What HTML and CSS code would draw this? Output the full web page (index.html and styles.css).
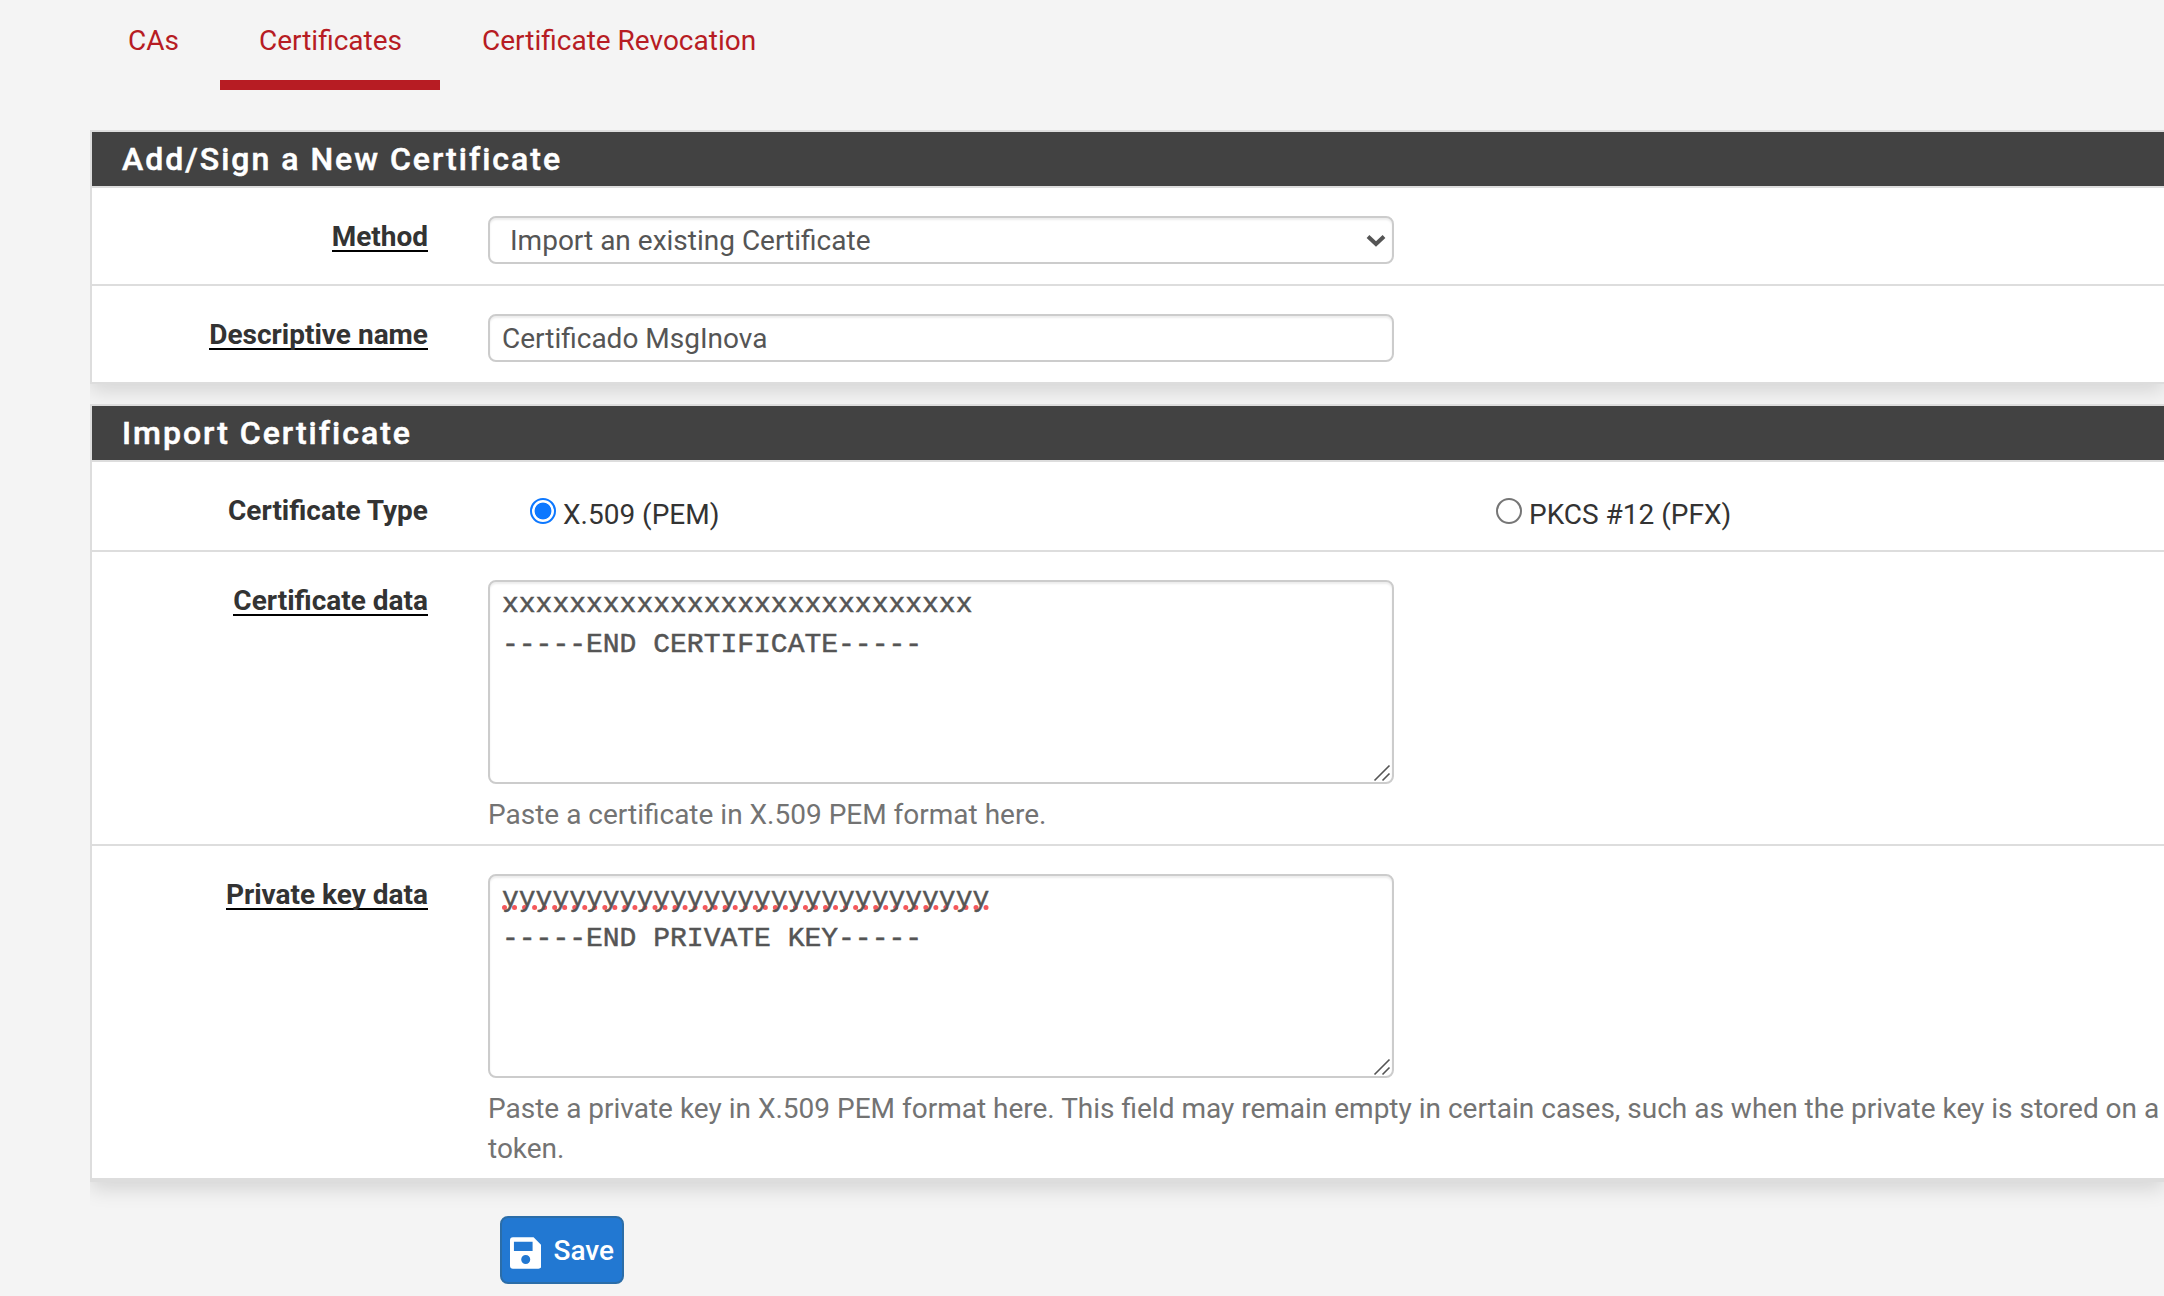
FILE: index.html
```html
<!DOCTYPE html>
<html lang="en">
<head>
<meta charset="utf-8">
<title>Certificates</title>
<link rel="stylesheet" href="styles.css">
</head>
<body>
<nav class="tabs">
  <a class="tab">CAs</a>
  <a class="tab active">Certificates</a>
  <a class="tab">Certificate Revocation</a>
</nav>
<form class="form">
  <section class="panel">
    <h2 class="heading">Add/Sign a New Certificate</h2>
    <div class="row">
      <div class="label"><span class="required">Method</span></div>
      <div class="field">
        <div class="control select"><span>Import an existing Certificate</span>
          <svg class="chevron" width="20" height="14" viewBox="0 0 20 14"><path d="M2 2.5l8 7.5 8-7.5" fill="none" stroke="#555" stroke-width="4"/></svg>
        </div>
      </div>
    </div>
    <div class="row">
      <div class="label"><span class="required">Descriptive name</span></div>
      <div class="field"><div class="control">Certificado MsgInova</div></div>
    </div>
  </section>
  <section class="panel import">
    <h2 class="heading">Import Certificate</h2>
    <div class="row types">
      <div class="label">Certificate Type</div>
      <div class="field radios">
        <label class="option"><span class="radio checked"></span>X.509 (PEM)</label>
        <label class="option"><span class="radio"></span>PKCS #12 (PFX)</label>
      </div>
    </div>
    <div class="row">
      <div class="label"><span class="required">Certificate data</span></div>
      <div class="field">
        <div class="control area"><div>xxxxxxxxxxxxxxxxxxxxxxxxxxxx</div><div>-----END CERTIFICATE-----</div>
          <svg class="grip" width="18" height="18" viewBox="0 0 18 18"><path d="M1.5 16.5l15-15M9.500 16.500l7-7" fill="none" stroke="#555" stroke-width="1.6"/></svg>
        </div>
        <p class="help">Paste a certificate in X.509 PEM format here.</p>
      </div>
    </div>
    <div class="row last">
      <div class="label"><span class="required">Private key data</span></div>
      <div class="field">
        <div class="control area"><div><span class="misspelled">yyyyyyyyyyyyyyyyyyyyyyyyyyyyy</span></div><div>-----END PRIVATE KEY-----</div>
          <svg class="grip" width="18" height="18" viewBox="0 0 18 18"><path d="M1.5 16.5l15-15M9.500 16.500l7-7" fill="none" stroke="#555" stroke-width="1.6"/></svg>
        </div>
        <p class="help">Paste a private key in X.509 PEM format here. This field may remain empty in certain cases, such as when the private key is stored on a<br>token.</p>
      </div>
    </div>
  </section>
  <button class="save" type="button">
    <svg width="32" height="32" viewBox="0 0 32 32"><path fill="#fff" fill-rule="evenodd" d="M3 0h21l8 8v21a3 3 0 0 1-3 3H3a3 3 0 0 1-3-3V3a3 3 0 0 1 3-3zM4 4.500v9.500h19V4.500zM16 18a4.600 4.600 0 1 0 0 9.200a4.600 4.600 0 1 0 0-9.200z"/></svg>
    <span>Save</span>
  </button>
</form>
</body>
</html>
```
FILE: styles.css
```css
* { box-sizing: border-box; }
body {
  margin: 0;
  height: 1296px;
  overflow: hidden;
  background: #f4f4f4;
  color: #333;
  font: 28px/40px Roboto, sans-serif;
}
.tabs { display: flex; height: 90px; padding-left: 90px; }
.tab { padding: 21px 38px 0; border-bottom: 10px solid transparent; color: #b71c23; white-space: nowrap; }
.tab + .tab { margin-left: 4px; }
.tab + .tab.active { margin-left: 3px; padding-left: 39px; }
.tab.active { border-color: #b71c23; }
.form { padding: 40px 0 0 90px; }
.panel {
  margin-bottom: 20px;
  background: #fff;
  border: 2px solid #ddd;
  border-right: 0;
  box-shadow: 0 6px 20px rgba(0, 0, 0, .14);
  clip-path: inset(0 0 -30px 0);
}
.heading {
  height: 56px;
  margin: 0;
  padding: 0 30px;
  background: #424242;
  border-bottom: 2px solid #ddd;
  color: #fff;
  font-size: 32px;
  font-weight: 500;
  line-height: 54px;
  letter-spacing: 2px;
  -webkit-text-stroke: .5px #fff;
}
.row { display: flex; height: 98px; padding-top: 28px; border-bottom: 2px solid #ddd; }
.row:last-child { border-bottom: 0; height: 96px; }
.label { width: 336px; padding-top: 1px; text-align: right; font-weight: 700; }
.required { display: inline-block; height: 35px; border-bottom: 2px solid #000; }
.field { flex: 1; min-width: 0; margin-left: 60px; }
.control {
  display: flex;
  align-items: center;
  width: 906px;
  height: 48px;
  padding: 2px 12px 0;
  border: 2px solid #ccc;
  border-radius: 8px;
  background: #fff;
  color: #555;
  box-shadow: inset 0 2px 2px rgba(0, 0, 0, .075);
}
.select { justify-content: space-between; padding: 2px 6px 0 20px; }
.import .row { height: 294px; }
.import .types { height: 90px; }
.import .last { height: 334px; border-bottom: 2px solid #ddd; }
.radios { display: flex; padding: 5px 0 0 42px; }
.option { display: flex; flex: 0 0 auto; gap: 7px; }
.option:first-child { width: 966px; }
.radio { width: 26px; height: 26px; margin-top: 3px; border: 2px solid #767676; border-radius: 50%; background: #fff; }
.radio.checked { border-color: #0d78ff; background: radial-gradient(circle, #0d78ff 8px, #fff 8.8px); }
.control.area {
  position: relative;
  display: block;
  height: 204px;
  padding: 3px 12px;
  font-family: "Liberation Mono", monospace;
  -webkit-text-stroke: .5px #555;
}
.grip { position: absolute; right: 1px; bottom: 0; }
.misspelled { text-decoration: underline dotted #f4585c 5px; text-underline-offset: -1px; text-decoration-skip-ink: none; }
.help { margin: 11px 0 0; color: #737373; white-space: nowrap; }
.save {
  display: flex;
  align-items: center;
  gap: 12px;
  width: 124px;
  height: 68px;
  margin: 34px 0 0 410px;
  padding: 2px 8px 0;
  border: 2px solid #2b6da8;
  border-radius: 8px;
  background: #2278d2;
  color: #fff;
  font: 500 28px/40px Roboto, sans-serif;
}
.save svg { margin-top: 3px; }
```
